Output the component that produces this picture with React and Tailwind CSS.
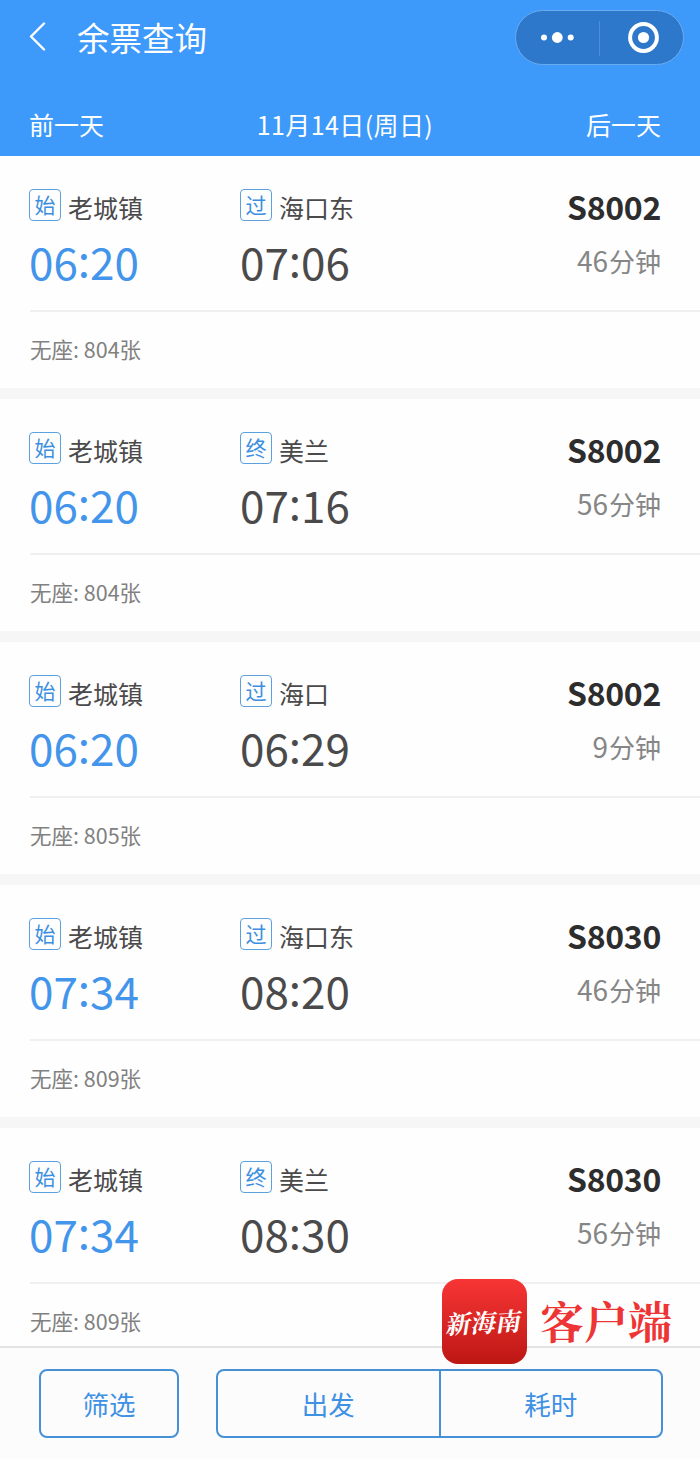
const trains = [
  { start: "06:20", type: "过", to: "海口东", end: "07:06", code: "S8002", duration: "46", seats: 804 },
  { start: "06:20", type: "终", to: "美兰", end: "07:16", code: "S8002", duration: "56", seats: 804 },
  { start: "06:20", type: "过", to: "海口", end: "06:29", code: "S8002", duration: "9", seats: 805 },
  { start: "07:34", type: "过", to: "海口东", end: "08:20", code: "S8030", duration: "46", seats: 809 },
  { start: "07:34", type: "终", to: "美兰", end: "08:30", code: "S8030", duration: "56", seats: 809 },
];

function Header() {
  return (
    <header className="h-[156px] bg-[#3d99fa] text-white">
      <div className="flex h-[74px] items-center pl-[29px] pr-4">
        <svg width="18" height="30" viewBox="0 0 18 30" fill="none" className="shrink-0">
          <path d="M15 1.5 L2 14.5 L15 27.5" stroke="currentColor" strokeWidth="2.4" strokeLinecap="round" strokeLinejoin="round" />
        </svg>
        <h1 className="ml-[30px] pt-px text-[32.5px] leading-none">余票查询</h1>
        <div className="ml-auto flex h-[55px] w-[169px] items-center rounded-full border border-[#6aacef] bg-[#2d78ca]">
          <svg width="167" height="53" viewBox="0 0 167 53" fill="white">
            <circle cx="28" cy="26.5" r="3" />
            <circle cx="41.3" cy="26.5" r="5.4" />
            <circle cx="54.7" cy="26.5" r="3" />
            <path d="M83.5 10 V45" stroke="#4b8ed8" />
            <circle cx="127.5" cy="26.5" r="13.4" fill="none" stroke="white" strokeWidth="4" />
            <circle cx="127.5" cy="26.5" r="5.6" />
          </svg>
        </div>
      </div>
      <div className="flex items-center justify-between pl-[29px] pr-[39px] pt-8 text-[25px] leading-9">
        <span>前一天</span>
        <span className="tracking-[0.4px]">11月14日(周日)</span>
        <span>后一天</span>
      </div>
    </header>
  );
}

function Station({ tag, name }) {
  return (
    <div className="flex h-8 items-center">
      <span className="flex size-8 items-center justify-center rounded border border-[#5ba0df] pb-px text-[21px] leading-none text-[#3c8fe0]">
        {tag}
      </span>
      <span className="ml-[7px] mt-[3px] text-[25px] leading-8">{name}</span>
    </div>
  );
}

function Time({ value }) {
  const [hour, minute] = value.split(":");
  return (
    <div className="mt-4 text-[44px] leading-[48px]">
      {hour}
      <span className="relative -top-[3px]">:</span>
      {minute}
    </div>
  );
}

function TrainCard({ train }) {
  return (
    <li className="h-[243px] shrink-0 border-b-[11px] border-[#f6f6f6] bg-[#fefefe]">
      <div className="ml-[30px] flex h-[156px] border-b-2 border-[#f0f0f0] pr-[39px] pt-[33px] text-[#4b4a4b]">
        <div className="-ml-px w-[211px]">
          <Station tag="始" name="老城镇" />
          <div className="text-[#4295ea]">
            <Time value={train.start} />
          </div>
        </div>
        <div>
          <Station tag={train.type} name={train.to} />
          <Time value={train.end} />
        </div>
        <div className="ml-auto text-right">
          <div className="-mt-px text-[32px] font-bold leading-9 tracking-[-0.3px] text-[#2e2d2e]">{train.code}</div>
          <div className="mt-[18px] text-[26px] leading-9 text-[#868686]">
            <span className="mr-px text-[28px]">{train.duration}</span>分钟
          </div>
        </div>
      </div>
      <div className="ml-[30px] pt-[21px] text-[21.5px] leading-8 text-[#818181]">无座: {train.seats}张</div>
    </li>
  );
}

function FilterBar() {
  return (
    <footer className="flex h-[113px] shrink-0 border-t-2 border-[#e3e3e3] bg-[#fcfcfd] pl-[39px] pr-[37px] pt-[21px] text-[26.5px] text-[#3f91e3]">
      <button className="h-[69px] w-[140px] rounded-lg border-2 border-[#4690d5]">筛选</button>
      <div className="ml-[37px] flex h-[69px] flex-1 rounded-lg border-2 border-[#4690d5]">
        <button className="flex-1 border-r-2 border-[#4690d5]">出发</button>
        <button className="flex-1">耗时</button>
      </div>
    </footer>
  );
}

function Watermark() {
  return (
    <div className="absolute left-[442px] top-[1279px] flex items-center">
      <div className="flex size-[85px] items-center justify-center rounded-2xl bg-linear-to-b from-[#f73535] to-[#bd1713]">
        <span className="-rotate-3 -skew-x-12 whitespace-nowrap font-['Noto_Serif_CJK_SC','Noto_Sans_CJK_SC',serif] text-[25px] font-bold leading-none text-white">
          新海南
        </span>
      </div>
      <span className="-mt-1 ml-[13px] whitespace-nowrap font-['Noto_Serif_CJK_SC','Noto_Sans_CJK_SC',serif] text-[44px] font-bold leading-none text-[#ee3535]">
        客户端
      </span>
    </div>
  );
}

function App() {
  return (
    <div className="relative flex h-[1459px] w-[700px] flex-col overflow-hidden bg-white font-['Noto_Sans_CJK_SC',sans-serif]">
      <Header />
      <ul className="min-h-0 flex-1 overflow-hidden">
        {trains.map((train, i) => (
          <TrainCard key={i} train={train} />
        ))}
      </ul>
      <FilterBar />
      <Watermark />
    </div>
  );
}

export default App;
